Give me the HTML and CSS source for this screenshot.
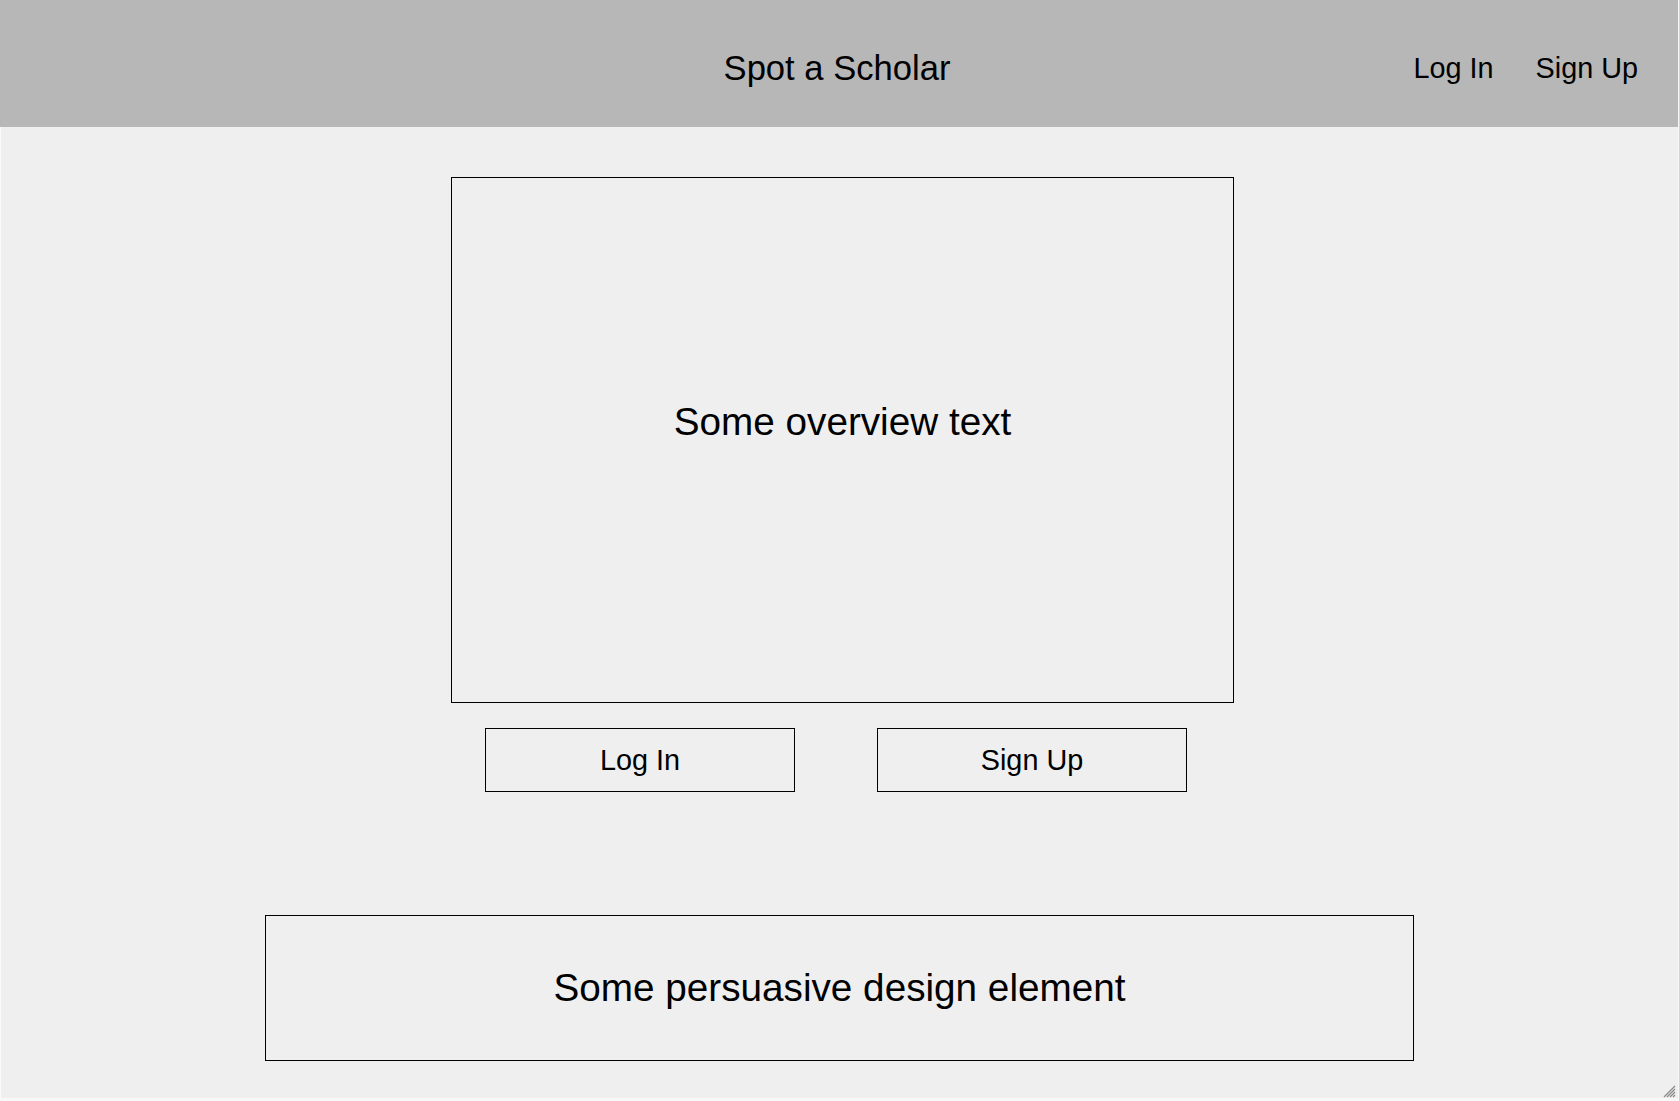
FILE: index.html
```html
<!DOCTYPE html>
<html lang="en">
<head>
    <meta charset="UTF-8">
    <meta name="viewport" content="width=device-width, initial-scale=1.0">
    <title>Spot a Scholar</title>
    <link rel="stylesheet" href="styles.css">
</head>
<body>
    <div class="frame">
        <header class="topbar">
            <div></div>
            <h1 class="brand">Spot a Scholar</h1>
            <nav class="nav">
                <a href="#">Log In</a>
                <a href="#">Sign Up</a>
            </nav>
        </header>

        <main class="content">
            <section class="overview">
                <p>Some overview text</p>
            </section>

            <div class="actions">
                <button type="button">Log In</button>
                <button type="button">Sign Up</button>
            </div>

            <section class="persuade">
                <p>Some persuasive design element</p>
            </section>
        </main>

        <svg class="grip" width="13" height="13" viewBox="0 0 13 13">
            <path d="M12 1 L1 12 M12 4 L4 12 M12 7 L7 12 M12 10 L10 12" stroke="#888" stroke-width="1.2" />
        </svg>
    </div>
</body>
</html>
```

FILE: styles.css
```css
* {
    box-sizing: border-box;
}

body {
    margin: 0;
    padding: 0;
    font-family: "Liberation Sans", Arial, sans-serif;
    background: #efefef;
    color: #000;
}

.frame {
    position: relative;
    display: flex;
    flex-direction: column;
    height: 1101px;
    overflow: hidden;
    border-right: 1px solid #f8f8f8;
    border-bottom: 3px solid #f8f8f8;
}

.topbar {
    display: grid;
    grid-template-columns: 1fr auto 1fr;
    align-items: center;
    height: 127px;
    flex-shrink: 0;
    padding: 9px 40px 0 36px;
    background: #b7b7b7;
}

.brand {
    margin: 0;
    font-size: 34.6px;
    font-weight: normal;
}

.nav {
    justify-self: end;
    display: flex;
    gap: 42px;
}

.nav a {
    color: #000;
    text-decoration: none;
    font-size: 28.8px;
}

.content {
    flex: 1;
    display: flex;
    flex-direction: column;
    align-items: center;
    padding-top: 50px;
    border-left: 1px solid #fafafa;
}

.overview {
    width: 783px;
    height: 526px;
    margin-left: 6px;
    border: 1px solid #000;
    display: flex;
    align-items: center;
    justify-content: center;
    padding-bottom: 36px;
}

.overview p,
.persuade p {
    margin: 0;
    font-size: 38.7px;
}

.actions {
    display: flex;
    gap: 82px;
    margin-top: 25px;
    margin-right: 7px;
}

.actions button {
    width: 310px;
    height: 64px;
    padding-top: 2px;
    background: transparent;
    border: 1px solid #000;
    font-family: inherit;
    font-size: 28.8px;
    color: #000;
    cursor: pointer;
}

.persuade {
    width: 1149px;
    height: 146px;
    margin-top: 123px;
    border: 1px solid #000;
    display: flex;
    align-items: center;
    justify-content: center;
}

.grip {
    position: absolute;
    right: 2px;
    bottom: 0;
}
```
